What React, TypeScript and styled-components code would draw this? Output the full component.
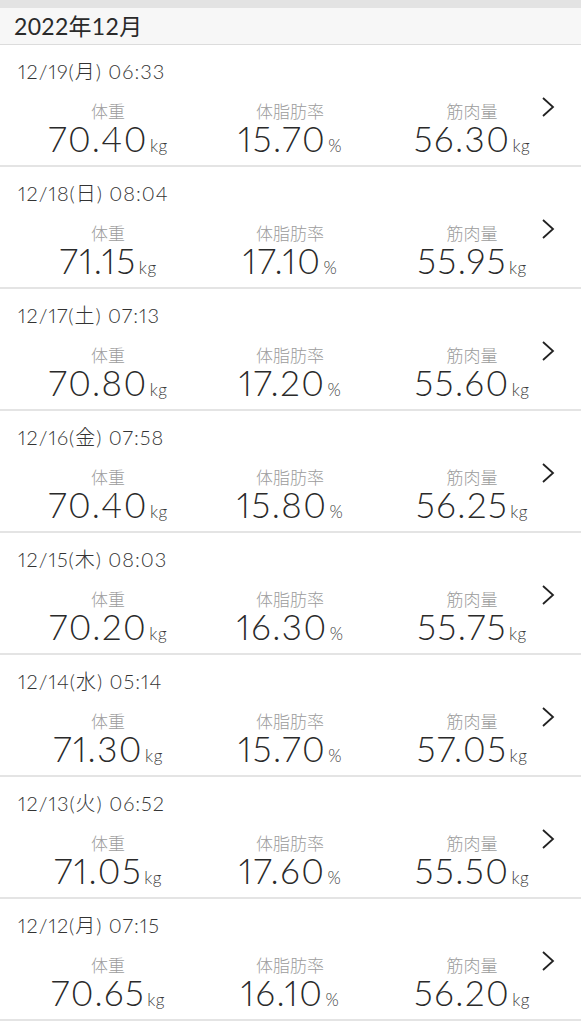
import React from 'react';
import styled, { createGlobalStyle } from 'styled-components';

const records = [
  { date: '12/19(月) 06:33', weight: '70.40', fat: '15.70', muscle: '56.30' },
  { date: '12/18(日) 08:04', weight: '71.15', fat: '17.10', muscle: '55.95' },
  { date: '12/17(土) 07:13', weight: '70.80', fat: '17.20', muscle: '55.60' },
  { date: '12/16(金) 07:58', weight: '70.40', fat: '15.80', muscle: '56.25' },
  { date: '12/15(木) 08:03', weight: '70.20', fat: '16.30', muscle: '55.75' },
  { date: '12/14(水) 05:14', weight: '71.30', fat: '15.70', muscle: '57.05' },
  { date: '12/13(火) 06:52', weight: '71.05', fat: '17.60', muscle: '55.50' },
  { date: '12/12(月) 07:15', weight: '70.65', fat: '16.10', muscle: '56.20' },
];

const GlobalStyle = createGlobalStyle`
  body {
    margin: 0;
    background: #fff;
    font-family: Lato, "Noto Sans CJK JP", sans-serif;
    color: #333;
  }
`;

const App = () => {
  return (
    <>
      <GlobalStyle />
      <Page>
        <TopBar />
        <MonthHeader>2022年12月</MonthHeader>
        {records.map((r) => (
          <Row key={r.date}>
            <DateText>{r.date}</DateText>
            <Body>
              <Stats>
                <Stat>
                  <Label>体重</Label>
                  <Value>{r.weight}<Unit>kg</Unit></Value>
                </Stat>
                <Stat>
                  <Label>体脂肪率</Label>
                  <Value>{r.fat}<Unit>%</Unit></Value>
                </Stat>
                <Stat>
                  <Label>筋肉量</Label>
                  <Value>{r.muscle}<Unit>kg</Unit></Value>
                </Stat>
              </Stats>
              <Chevron viewBox="0 0 16 22">
                <path d="M3 2 L13 11 L3 20" fill="none" stroke="#222" strokeWidth="1.8" />
              </Chevron>
            </Body>
          </Row>
        ))}
      </Page>
    </>
  );
};

export default App;

const Page = styled.div`
  width: 581px;
  overflow: hidden;
`;

const TopBar = styled.div`
  height: 8px;
  background: #e3e3e3;
`;

const MonthHeader = styled.div`
  height: 36px;
  background: #f7f7f7;
  border-bottom: 1px solid #dcdcdc;
  padding-left: 14px;
  font-size: 23px;
  line-height: 36px;
  letter-spacing: 0.3px;
  color: #2a2a2a;
`;

const Row = styled.div`
  height: 120px;
  border-bottom: 2px solid #e4e4e4;
  box-sizing: content-box;
  padding-left: 18px;
`;

const DateText = styled.div`
  padding-top: 14px;
  font-size: 20px;
  font-weight: 300;
  line-height: 24px;
  letter-spacing: 1px;
  color: #333;
  font-variant-numeric: proportional-nums;
`;

const Body = styled.div`
  display: flex;
  align-items: flex-start;
  margin-top: 18px;
`;

const Stats = styled.div`
  display: grid;
  grid-template-columns: repeat(3, 182px);
  margin-left: -1px;
`;

const Stat = styled.div`
  display: flex;
  flex-direction: column;
  align-items: center;
`;

const Label = styled.div`
  font-size: 17px;
  font-weight: 300;
  line-height: 22px;
  color: #9c9c9c;
`;

const Value = styled.div`
  font-size: 35px;
  font-weight: 300;
  line-height: 30px;
  letter-spacing: 1.5px;
  color: #2a2a2a;
  font-variant-numeric: proportional-nums;
`;

const Unit = styled.span`
  font-size: 17px;
  letter-spacing: 0.5px;
  margin-left: 2px;
  color: #3a3a3a;
`;

const Chevron = styled.svg`
  width: 16px;
  height: 22px;
  margin-left: -23px;
  margin-top: -5px;
`;
